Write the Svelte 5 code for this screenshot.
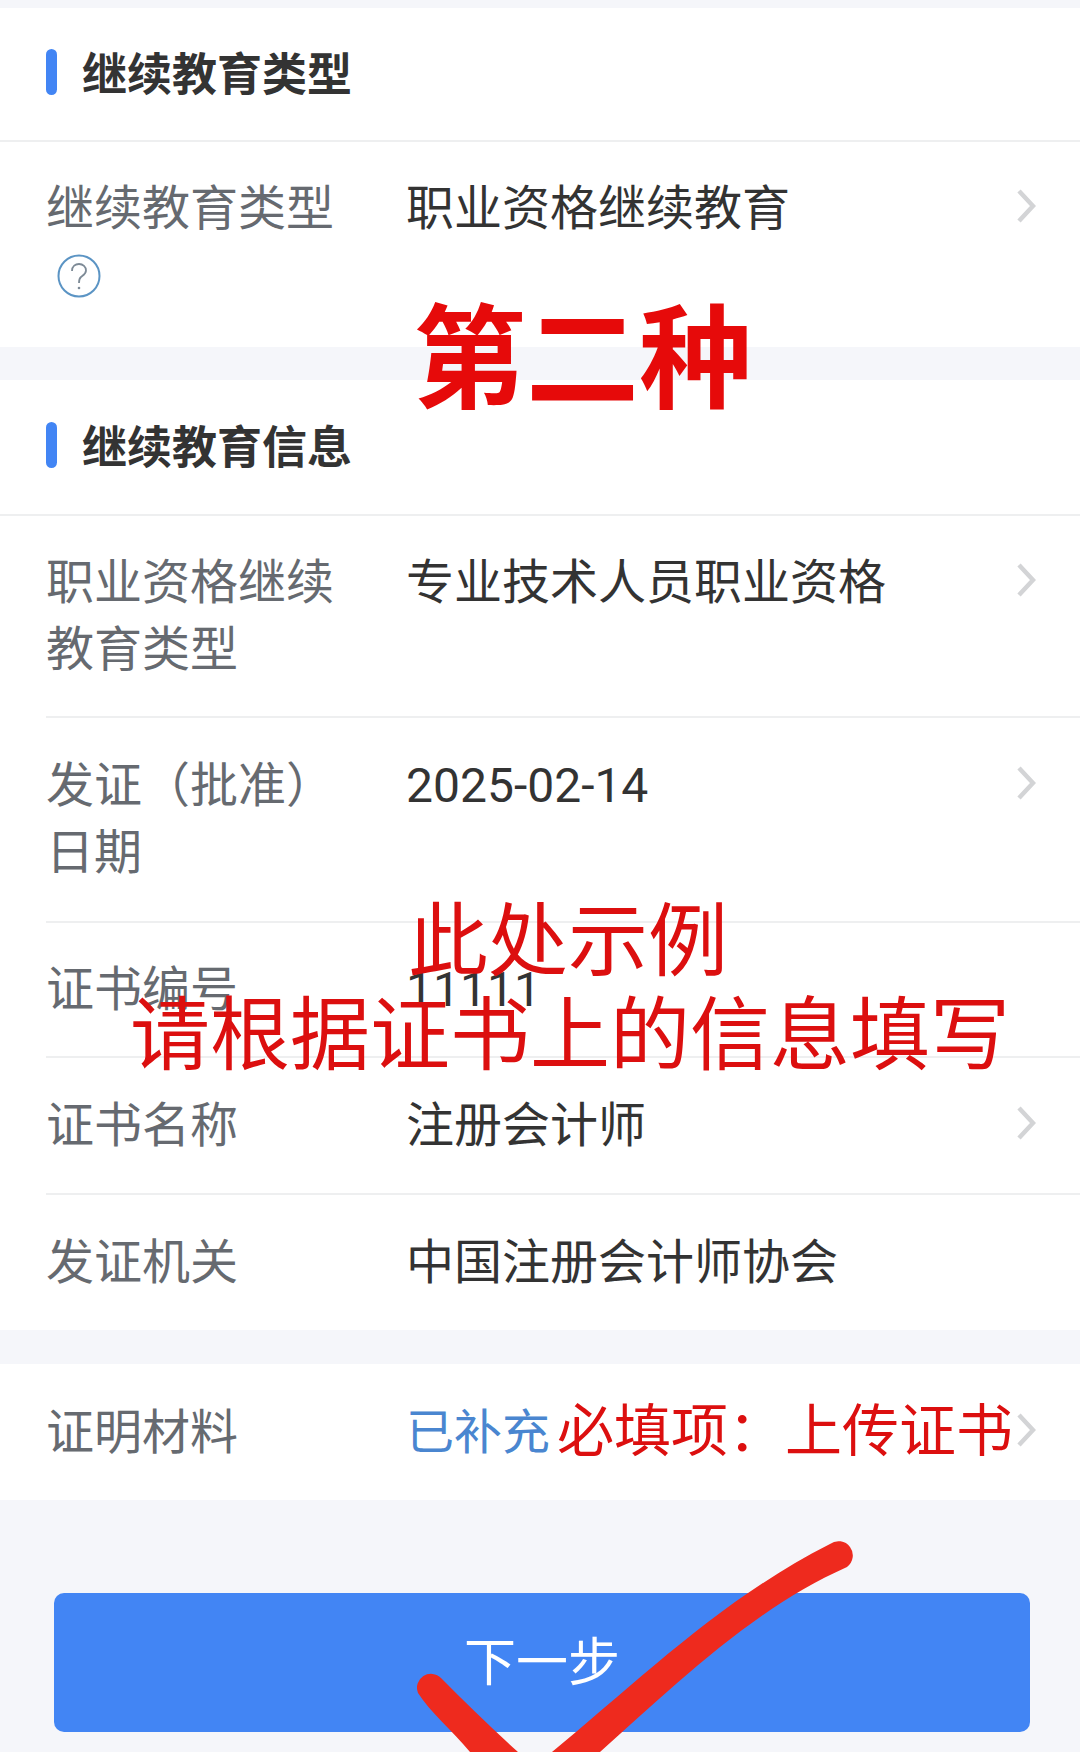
<script>
  const infoRows = [
    { label: '职业资格继续教育类型', value: '专业技术人员职业资格', arrow: true, cls: 'r1' },
    { label: '发证（批准）日期', value: '2025-02-14', arrow: true, cls: 'r2' },
    { label: '证书编号', value: '11111', arrow: false, cls: 'r3' },
    { label: '证书名称', value: '注册会计师', arrow: true, cls: 'r4' },
    { label: '发证机关', value: '中国注册会计师协会', arrow: false, cls: 'r5' }
  ];
</script>

{#snippet chevron()}
  <svg class="chev" width="20" height="36" viewBox="0 0 20 36"><path d="M3 3 L17 18 L3 33" fill="none" stroke="#d3d4d6" stroke-width="4.5"/></svg>
{/snippet}

<div class="page">
  <section class="first">
    <h2 class="title"><i class="bar"></i>继续教育类型</h2>
    <div class="row type">
      <div class="label">继续教育类型
        <svg class="help" width="44" height="44" viewBox="0 0 44 44">
          <circle cx="22" cy="22" r="20.5" fill="none" stroke="#5b94c4" stroke-width="2"/>
          <path d="M15 17 C15 12 18.500 10 22 10 C26 10 29 13 29 16.500 C29 20 26 21.500 24 23 C22.500 24.200 22 26 22 29" fill="none" stroke="#7d8a96" stroke-width="1.800"/>
          <circle cx="22" cy="34" r="1.300" fill="#7d8a96"/>
        </svg>
      </div>
      <div class="value">职业资格继续教育</div>
      {@render chevron()}
    </div>
  </section>

  <section class="second">
    <h2 class="title"><i class="bar"></i>继续教育信息</h2>
    <div class="rows">
      {#each infoRows as r}
        <div class="row {r.cls}">
          <div class="label">{r.label}</div>
          <div class="value">{r.value}</div>
          {#if r.arrow}{@render chevron()}{/if}
        </div>
      {/each}
    </div>
  </section>

  <section class="third">
    <div class="row proof">
      <div class="label">证明材料</div>
      <div class="value done">已补充</div>
      {@render chevron()}
    </div>
  </section>

  <div class="foot">
    <button class="next">下一步</button>
  </div>

  <div class="note n1">第二种</div>
  <div class="note n2">此处示例</div>
  <div class="note n3">请根据证书上的信息填写</div>
  <div class="note n4">必填项：上传证书</div>
  <svg class="tick" width="1080" height="1752" viewBox="0 0 1080 1752">
    <path fill="#ee2a1e" d="M552 1752 C 640 1680 720 1600 830 1544 A 13.500 13.500 0 0 1 847 1567 C 750 1610 670 1690 600 1752 Z"/>
    <path fill="#ee2a1e" d="M518 1752 C 490 1727 465 1702 441 1678 A 14 14 0 0 0 418 1693 C 430 1712 452 1730 470 1752 Z"/>
  </svg>
</div>

<style>
  :global(body) { margin: 0; background: #f5f6fa; }
  .page {
    position: relative;
    width: 1080px;
    height: 1752px;
    overflow: hidden;
    background: #f5f6fa;
    padding-top: 8px;
    box-sizing: border-box;
    font-family: "Noto Sans CJK SC", "Noto Sans", sans-serif;
    font-size: 48px;
    line-height: 68px;
  }
  section { background: #fff; }
  .first { height: 339px; }
  .second { margin-top: 33px; height: 950px; }
  .third { margin-top: 34px; height: 136px; }
  .title {
    display: flex;
    align-items: center;
    gap: 25px;
    margin: 0;
    height: 134px;
    box-sizing: border-box;
    padding: 0 0 5px 46px;
    border-bottom: 2px solid #eeeff0;
    font-size: 45px;
    font-weight: 700;
    color: #333;
  }
  .second .title { height: 136px; }
  .bar { width: 11px; height: 46px; border-radius: 6px; background: #4285f4; }
  .row {
    display: flex;
    align-items: flex-start;
    padding: 29px 44px 0 46px;
    box-sizing: border-box;
    position: relative;
  }
  .rows .row { margin-left: 46px; padding-left: 0; border-bottom: 2px solid #eeeff0; }
  .rows .row:last-child { border-bottom: none; }
  .r1 { height: 202px; }
  .r2 { height: 205px; padding-top: 30px; }
  .r3 { height: 135px; padding-top: 29px; }
  .r4 { height: 137px; padding-top: 30px; }
  .r5 { height: 134px; padding-top: 30px; }
  .type { height: 205px; }
  .proof { height: 136px; padding-top: 31px; }
  .label { width: 360px; flex: none; padding-right: 60px; box-sizing: border-box; color: #666a70; font-weight: 400; line-height: 67px; }
  .value { flex: 1; margin-top: 4px; color: #333; font-weight: 400; font-family: Roboto, "Noto Sans CJK SC", sans-serif; }
  .done { color: #4a86d0; }
  .help { display: block; margin: 16px 0 0 11px; }
  .chev { flex: none; margin-top: 17px; }
  .foot { padding: 93px 50px 0 54px; }
  .next {
    display: block;
    width: 100%;
    height: 139px;
    border: none;
    border-radius: 10px;
    padding: 0 0 8px;
    background: #4285f4;
    color: #fff;
    font: 400 52px "Noto Sans CJK SC", sans-serif;
  }
  .note {
    position: absolute;
    white-space: nowrap;
    line-height: 1;
    color: #dc0f0f;
  }
  .n1 { left: 413px; top: 294px; font-size: 113px; font-weight: 700; color: #e60a0a; }
  .n2 { left: 408px; top: 894px; font-size: 80px; }
  .n3 { left: 130px; top: 988px; font-size: 80px; }
  .n4 { left: 557px; top: 1398px; font-size: 57px; }
  .tick { position: absolute; left: 0; top: 0; pointer-events: none; }
</style>
